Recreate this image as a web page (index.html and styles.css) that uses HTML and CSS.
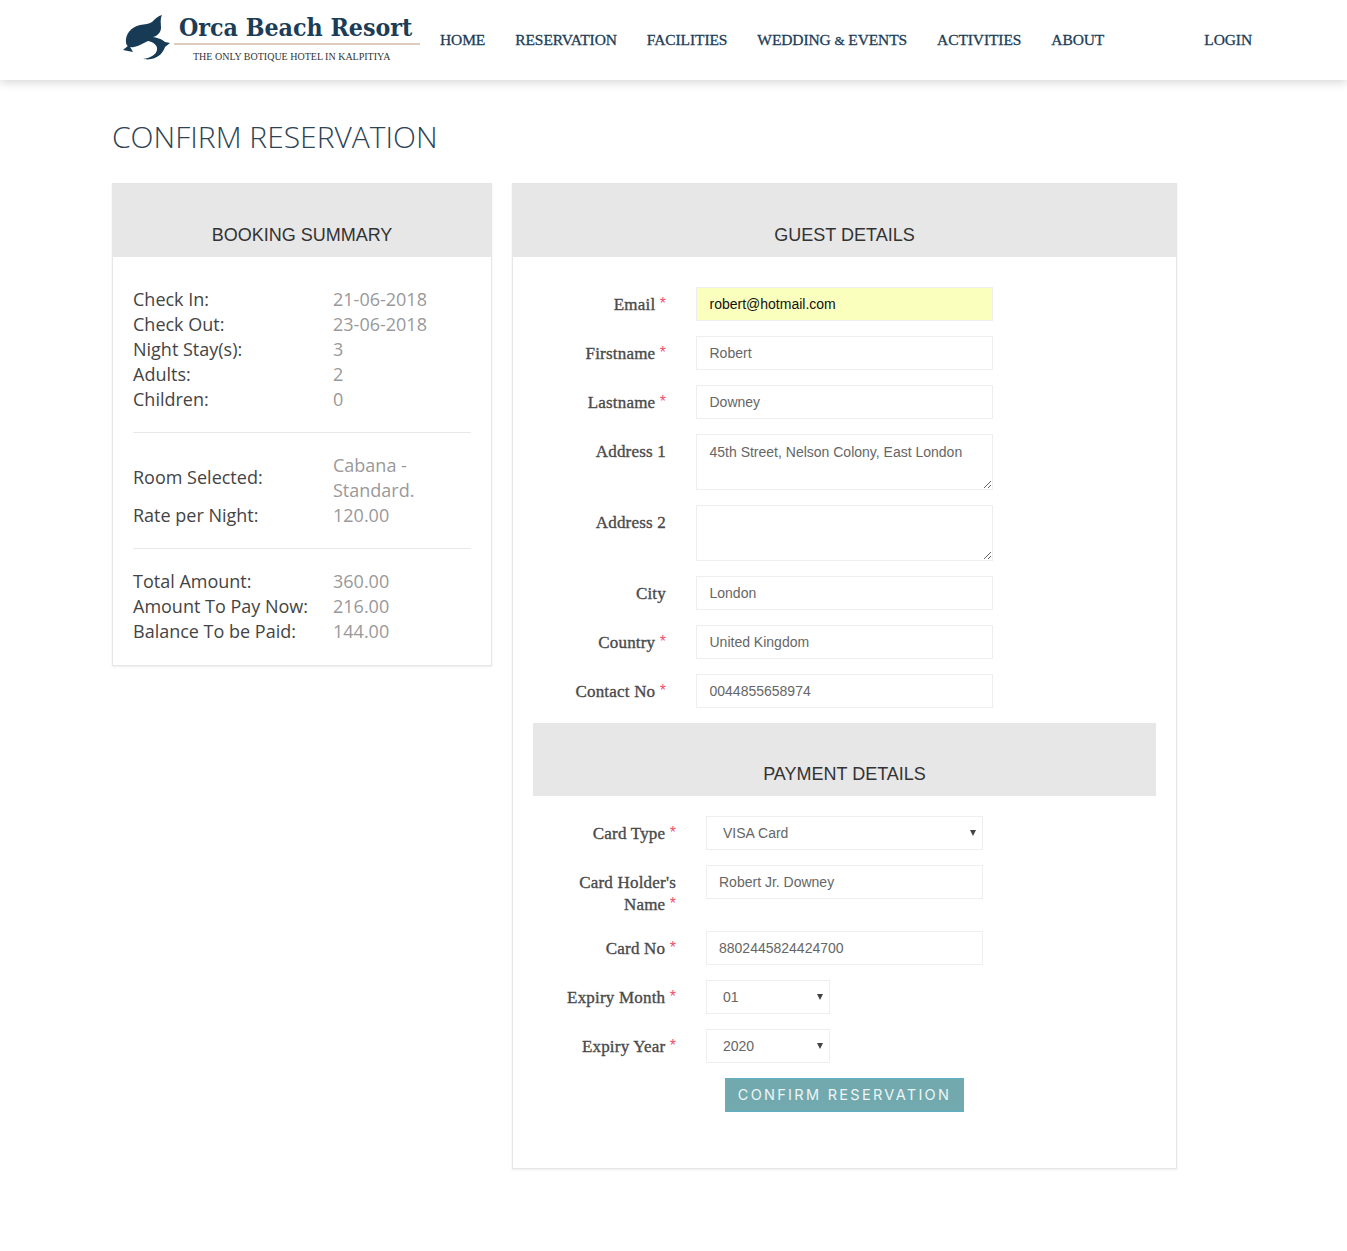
FILE: index.html
```html
<!DOCTYPE html>
<html lang="en">
<head>
    <meta charset="UTF-8">
    <meta name="viewport" content="width=device-width, initial-scale=1.0">
    <title>Orca Beach Resort - Confirm Reservation</title>
    <link rel="stylesheet" href="styles.css">
</head>
<body>
    <header class="site-header">
        <a class="logo" href="#">
            <svg class="logo-mark" viewBox="0 0 60 54" width="60" height="54" aria-hidden="true">
                <path d="M8 33C7 24 13 17 22 15C27 14 31 14 34 12C37 9 40 6 44 5C42 9 43 13 43 18C43 21 41 24 38 26C36 27 34 27 32 27C38 27 44 29 47 32L52 33L47 37C45 43 40 48 33 49C29 50 27 49 25 49C32 48 38 45 39 40C40 36 36 32 30 31C25 33 21 36 16 37C12 38 9 37 8 33Z"/>
                <path d="M5 40L11 35L15 42Z"/>
            </svg>
            <span class="logo-text">
                <span class="logo-name">Orca Beach Resort</span>
                <span class="logo-tag">THE ONLY BOTIQUE HOTEL IN KALPITIYA</span>
            </span>
        </a>
        <nav class="main-nav">
            <a href="#">HOME</a>
            <a href="#">RESERVATION</a>
            <a href="#">FACILITIES</a>
            <a href="#">WEDDING <span class="amp">&amp;</span> EVENTS</a>
            <a href="#">ACTIVITIES</a>
            <a href="#">ABOUT</a>
            <a class="login" href="#">LOGIN</a>
        </nav>
    </header>

    <main class="container">
        <h1>CONFIRM RESERVATION</h1>
        <div class="columns">
            <section class="panel summary">
                <h2 class="panel-title">BOOKING SUMMARY</h2>
                <div class="summary-body">
                    <dl class="summary-list">
                        <dt>Check In:</dt><dd>21-06-2018</dd>
                        <dt>Check Out:</dt><dd>23-06-2018</dd>
                        <dt>Night Stay(s):</dt><dd>3</dd>
                        <dt>Adults:</dt><dd>2</dd>
                        <dt>Children:</dt><dd>0</dd>
                    </dl>
                    <hr>
                    <dl class="summary-list">
                        <dt class="middle">Room Selected:</dt><dd>Cabana - Standard.</dd>
                        <dt>Rate per Night:</dt><dd>120.00</dd>
                    </dl>
                    <hr>
                    <dl class="summary-list">
                        <dt>Total Amount:</dt><dd>360.00</dd>
                        <dt>Amount To Pay Now:</dt><dd>216.00</dd>
                        <dt>Balance To be Paid:</dt><dd>144.00</dd>
                    </dl>
                </div>
            </section>

            <section class="panel guest">
                <h2 class="panel-title">GUEST DETAILS</h2>
                <form class="guest-body">
                    <div class="form-rows guest-rows">
                        <label for="email">Email <em>*</em></label>
                        <input class="autofilled" type="text" id="email" value="robert@hotmail.com">
                        <label for="firstname">Firstname <em>*</em></label>
                        <input type="text" id="firstname" value="Robert">
                        <label for="lastname">Lastname <em>*</em></label>
                        <input type="text" id="lastname" value="Downey">
                        <label for="address1">Address 1</label>
                        <textarea id="address1">45th Street, Nelson Colony, East London</textarea>
                        <label for="address2">Address 2</label>
                        <textarea id="address2"></textarea>
                        <label for="city">City</label>
                        <input type="text" id="city" value="London">
                        <label for="country">Country <em>*</em></label>
                        <input type="text" id="country" value="United Kingdom">
                        <label for="contact">Contact No <em>*</em></label>
                        <input type="text" id="contact" value="0044855658974">
                    </div>

                    <h2 class="panel-title payment-title">PAYMENT DETAILS</h2>

                    <div class="form-rows payment-rows">
                        <label for="cardType">Card Type <em>*</em></label>
                        <div class="select-wrap">
                            <select id="cardType"><option>VISA Card</option></select>
                        </div>
                        <label for="holder">Card Holder's<br>Name <em>*</em></label>
                        <input type="text" id="holder" value="Robert Jr. Downey">
                        <label for="cardNo">Card No <em>*</em></label>
                        <input type="text" id="cardNo" value="8802445824424700">
                        <label for="month">Expiry Month <em>*</em></label>
                        <div class="select-wrap short">
                            <select id="month"><option>01</option></select>
                        </div>
                        <label for="year">Expiry Year <em>*</em></label>
                        <div class="select-wrap short">
                            <select id="year"><option>2020</option></select>
                        </div>
                    </div>

                    <button class="confirm" type="button">CONFIRM RESERVATION</button>
                </form>
            </section>
        </div>
    </main>
</body>
</html>
```

FILE: styles.css
```css
* {
    box-sizing: border-box;
}

body {
    margin: 0;
    background-color: #fff;
    color: #555;
    font-family: "Open Sans", sans-serif;
}

a {
    color: inherit;
    text-decoration: none;
}

.site-header {
    display: flex;
    align-items: center;
    height: 80px;
    padding: 0 95px 0 118px;
    background: #fff;
    box-shadow: 0 2px 10px rgba(0, 0, 0, 0.18);
}

.logo {
    display: flex;
    align-items: center;
    margin-top: -6px;
}

.logo-mark {
    flex: none;
    margin-right: -4px;
    fill: #173a55;
}

.logo-text {
    display: flex;
    flex-direction: column;
    width: 246px;
}

.logo-name {
    width: 100%;
    padding: 1px 0 0 5px;
    border-bottom: 2px solid #dccdc0;
    color: #1c3d57;
    font-family: "DejaVu Serif Condensed", "DejaVu Serif", serif;
    font-size: 24.7px;
    font-weight: bold;
    line-height: 30px;
    white-space: nowrap;
}

.logo-tag {
    margin: 5px 0 0 19px;
    color: #333;
    font-family: "Liberation Serif", serif;
    font-size: 10px;
    line-height: 13px;
    white-space: nowrap;
}

.main-nav {
    flex: 1;
    display: flex;
    gap: 30px;
    margin: 0 0 0 20px;
    color: #1c3d57;
    font-family: "Liberation Serif", serif;
    font-size: 15.5px;
    letter-spacing: -0.1px;
    line-height: 22px;
    -webkit-text-stroke: 0.3px #1c3d57;
    white-space: nowrap;
}

.amp {
    font-size: 13px;
}

.login {
    margin-left: auto;
}

.container {
    padding: 39px 0 80px 112px;
}

h1 {
    margin: 0 0 29px;
    color: #2e4454;
    font-size: 30px;
    font-weight: 300;
    line-height: 35px;
}

.columns {
    display: flex;
    align-items: flex-start;
    gap: 20px;
}

.panel {
    border: 1px solid #e6e6e6;
    box-shadow: 0 1px 2px rgba(0, 0, 0, 0.08);
}

.summary {
    width: 380px;
}

.guest {
    width: 665px;
}

.panel-title {
    margin: 0;
    padding: 41px 0 0;
    height: 73px;
    background: #e7e7e7;
    color: #333;
    font-family: "Liberation Sans", Arial, sans-serif;
    font-size: 18px;
    font-weight: normal;
    line-height: 20px;
    text-align: center;
}

.summary-body {
    padding: 30px 20px 21px;
}

.summary-list {
    display: grid;
    grid-template-columns: 200px 138px;
    margin: 0;
    font-size: 18px;
    line-height: 25px;
}

.summary-list dt {
    color: #444;
}

.summary-list dt.middle {
    align-self: center;
    padding-bottom: 2px;
}

.summary-list dd {
    margin: 0;
    color: #999;
}

hr {
    height: 1px;
    margin: 20px 0;
    border: 0;
    background: #e8e8e8;
}

.guest-body {
    padding: 30px 20px 56px;
}

.form-rows {
    display: grid;
    column-gap: 30px;
    row-gap: 15px;
}

.guest-rows {
    grid-template-columns: 133px 297px;
}

.payment-rows {
    grid-template-columns: 143px 277px;
}

label {
    padding-top: 7px;
    color: #4a4a4a;
    font-family: "Liberation Serif", serif;
    font-size: 17px;
    letter-spacing: 0.2px;
    line-height: 22px;
    -webkit-text-stroke: 0.35px #4a4a4a;
    text-align: right;
}

label em {
    color: #f0506e;
    font-family: "Liberation Sans", Arial, sans-serif;
    font-size: 16px;
    font-style: normal;
    letter-spacing: 0;
    line-height: 1;
    vertical-align: 1px;
    -webkit-text-stroke: 0;
}

input,
textarea,
select {
    display: block;
    width: 100%;
    height: 34px;
    margin: 0;
    padding: 0 12px;
    border: 1px solid #eee;
    border-radius: 0;
    background: #fff;
    color: #666;
    font-family: "Liberation Sans", Arial, sans-serif;
    font-size: 14px;
    outline: none;
}

.guest-rows input,
.guest-rows textarea {
    padding-left: 12.5px;
}

.autofilled {
    background: #fbffbd;
    color: #111;
}

textarea {
    height: 56px;
    padding-top: 8px;
    line-height: 18px;
    resize: vertical;
}

.payment-title {
    margin: 15px 0 20px;
}

.select-wrap {
    position: relative;
}

.select-wrap.short {
    width: 124px;
}

.select-wrap::after {
    content: "";
    position: absolute;
    top: 14px;
    right: 7px;
    border: 3.5px solid transparent;
    border-top: 6px solid #444;
    border-bottom: 0;
    pointer-events: none;
}

select {
    padding-left: 16px;
    appearance: none;
}

.confirm {
    display: block;
    width: 239px;
    height: 34px;
    margin: 15px auto 0;
    padding: 0 0 2px;
    border: 1px solid #5fb0c2;
    background-color: #72a9af;
    color: #eef5f5;
    font-family: Inter, sans-serif;
    font-size: 14.5px;
    letter-spacing: 2.3px;
    cursor: pointer;
}
```
